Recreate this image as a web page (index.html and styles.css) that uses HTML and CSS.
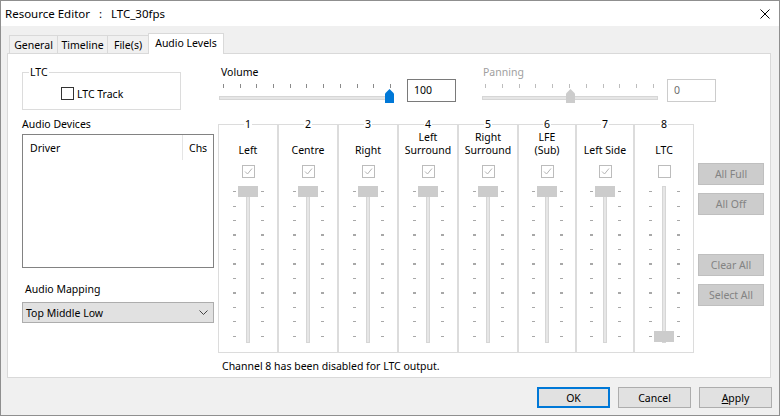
FILE: index.html
```html
<!DOCTYPE html>
<html lang="en">
<head>
  <meta charset="UTF-8" />
  <title>Resource Editor</title>
  <link rel="stylesheet" href="styles.css">
</head>
<body>
  <div class="window">
    <div class="titlebar">
      <span class="title">Resource Editor   :   LTC_30fps</span>
      <svg class="close" width="10" height="10" viewBox="0 0 10 10"><path d="M0.5 0.5 L9.5 9.5 M9.5 0.5 L0.5 9.5" stroke="#000" stroke-width="1"/></svg>
    </div>

    <div class="client">
      <div class="tabs">
        <div class="tab tab-general">General</div>
        <div class="tab tab-timeline">Timeline</div>
        <div class="tab tab-files">File(s)</div>
        <div class="tab active">Audio Levels</div>
      </div>

      <div class="panel">
        <!-- Coloana stanga -->
        <div class="left">
          <fieldset class="ltc">
            <legend>LTC</legend>
            <div class="ltc-row"><span class="check"></span><span>LTC Track</span></div>
          </fieldset>

          <div class="label devices-label">Audio Devices</div>
          <div class="listbox">
            <div class="list-head">
              <span class="col-driver">Driver</span>
              <span class="col-chs">Chs</span>
            </div>
          </div>

          <div class="label mapping-label">Audio Mapping</div>
          <div class="combo">
            <span>Top Middle Low</span>
            <svg width="9" height="6" viewBox="0 0 9 6"><path d="M0.5 0.5 L4.5 4.5 L8.5 0.5" fill="none" stroke="#444" stroke-width="1"/></svg>
          </div>
        </div>

        <!-- Coloana dreapta -->
        <div class="right">
          <div class="sliders">
            <div class="slider-group volume">
              <div class="slider-label">Volume</div>
              <div class="slider-row">
                <div class="slider">
                  <span class="ticks"></span>
                  <span class="rail"></span>
                  <svg class="knob" width="9" height="14" viewBox="0 0 9 14"><path d="M0 4.5 L4.5 0 L9 4.5 V14 H0 Z" fill="#0078d7"/></svg>
                </div>
                <div class="edit">100</div>
              </div>
            </div>
            <div class="slider-group panning disabled">
              <div class="slider-label">Panning</div>
              <div class="slider-row">
                <div class="slider">
                  <span class="ticks"></span>
                  <span class="rail"></span>
                  <svg class="knob" width="9" height="14" viewBox="0 0 9 14"><path d="M0 4.5 L4.5 0 L9 4.5 V14 H0 Z" fill="#cccccc"/></svg>
                </div>
                <div class="edit">0</div>
              </div>
            </div>
          </div>

          <div class="mixer">
            <div class="channels">
              <fieldset class="channel">
                <legend>1</legend>
                <div class="ch-body">
                  <div class="ch-name">Left</div>
                  <span class="check off"><svg width="11" height="11" viewBox="0 0 11 11"><path d="M2 5.5 L4.5 8 L9 2.5" fill="none" stroke="#b4b4b4"/></svg></span>
                  <div class="fader"><span class="track"></span><span class="scale"></span><span class="thumb"></span></div>
                </div>
              </fieldset>
              <fieldset class="channel">
                <legend>2</legend>
                <div class="ch-body">
                  <div class="ch-name">Centre</div>
                  <span class="check off"><svg width="11" height="11" viewBox="0 0 11 11"><path d="M2 5.5 L4.5 8 L9 2.5" fill="none" stroke="#b4b4b4"/></svg></span>
                  <div class="fader"><span class="track"></span><span class="scale"></span><span class="thumb"></span></div>
                </div>
              </fieldset>
              <fieldset class="channel">
                <legend>3</legend>
                <div class="ch-body">
                  <div class="ch-name">Right</div>
                  <span class="check off"><svg width="11" height="11" viewBox="0 0 11 11"><path d="M2 5.5 L4.5 8 L9 2.5" fill="none" stroke="#b4b4b4"/></svg></span>
                  <div class="fader"><span class="track"></span><span class="scale"></span><span class="thumb"></span></div>
                </div>
              </fieldset>
              <fieldset class="channel">
                <legend>4</legend>
                <div class="ch-body">
                  <div class="ch-name">Left<br>Surround</div>
                  <span class="check off"><svg width="11" height="11" viewBox="0 0 11 11"><path d="M2 5.5 L4.5 8 L9 2.5" fill="none" stroke="#b4b4b4"/></svg></span>
                  <div class="fader"><span class="track"></span><span class="scale"></span><span class="thumb"></span></div>
                </div>
              </fieldset>
              <fieldset class="channel">
                <legend>5</legend>
                <div class="ch-body">
                  <div class="ch-name">Right<br>Surround</div>
                  <span class="check off"><svg width="11" height="11" viewBox="0 0 11 11"><path d="M2 5.5 L4.5 8 L9 2.5" fill="none" stroke="#b4b4b4"/></svg></span>
                  <div class="fader"><span class="track"></span><span class="scale"></span><span class="thumb"></span></div>
                </div>
              </fieldset>
              <fieldset class="channel narrow">
                <legend>6</legend>
                <div class="ch-body">
                  <div class="ch-name">LFE<br>(Sub)</div>
                  <span class="check off"><svg width="11" height="11" viewBox="0 0 11 11"><path d="M2 5.5 L4.5 8 L9 2.5" fill="none" stroke="#b4b4b4"/></svg></span>
                  <div class="fader"><span class="track"></span><span class="scale"></span><span class="thumb"></span></div>
                </div>
              </fieldset>
              <fieldset class="channel narrow">
                <legend>7</legend>
                <div class="ch-body">
                  <div class="ch-name">Left Side</div>
                  <span class="check off"><svg width="11" height="11" viewBox="0 0 11 11"><path d="M2 5.5 L4.5 8 L9 2.5" fill="none" stroke="#b4b4b4"/></svg></span>
                  <div class="fader"><span class="track"></span><span class="scale"></span><span class="thumb"></span></div>
                </div>
              </fieldset>
              <fieldset class="channel">
                <legend>8</legend>
                <div class="ch-body">
                  <div class="ch-name">LTC</div>
                  <span class="check off"></span>
                  <div class="fader"><span class="track"></span><span class="scale"></span><span class="thumb low"></span></div>
                </div>
              </fieldset>
            </div>

            <div class="side-buttons">
              <div class="btn disabled">All Full</div>
              <div class="btn disabled">All Off</div>
              <div class="btn disabled gap">Clear All</div>
              <div class="btn disabled">Select All</div>
            </div>
          </div>

          <div class="note">Channel 8 has been disabled for LTC output.</div>
        </div>
      </div>

      <div class="footer">
        <div class="btn default">OK</div>
        <div class="btn">Cancel</div>
        <div class="btn"><u>A</u>pply</div>
      </div>
    </div>
  </div>
</body>
</html>
```

FILE: styles.css
```css
/* Baza */
* { box-sizing: border-box; }
body {
  margin: 0;
  font-family: "Noto Sans", "Liberation Sans", sans-serif;
  font-size: 10.5px;
  color: #000;
  background: #fff;
}

/* Fereastra */
.window {
  width: 780px; height: 416px;
  border: 1px solid #8f8f8f;
  background: #f0f0f0;
  display: flex;
  flex-direction: column;
}
.titlebar {
  height: 25px;
  background: #fff;
  display: flex;
  align-items: center;
  justify-content: space-between;
  padding: 0 9px 0 4px;
}
.title { white-space: pre; font-size: 11.5px; }
.close { display: block; }

.client {
  flex: 1;
  padding: 7px 8px 0 6px;
  display: flex;
  flex-direction: column;
}

/* Taburi */
.tabs {
  height: 20px;
  display: flex;
  align-items: flex-end;
  padding-left: 2px;
}
.tab {
  height: 18px;
  border: 1px solid #d9d9d9;
  border-bottom: none;
  margin-left: -1px;
  display: flex;
  align-items: center;
  justify-content: center;
  background: #f0f0f0;
}
.tab-general { width: 49px; margin-left: 0; }
.tab-timeline { width: 51px; }
.tab-files { width: 42px; }
.tab.active {
  width: 76px;
  height: 21px;
  margin: 0 0 -1px -1px;
  padding-bottom: 2px;
  background: #fff;
  position: relative;
  z-index: 1;
}

.panel {
  height: 325px;
  border: 1px solid #d9d9d9;
  background: #fff;
  display: flex;
}

/* Stanga */
.left {
  width: 192px;
  margin-left: 14px;
  padding-top: 11px;
}
fieldset {
  margin: 0;
  padding: 0;
  border: 1px solid #dcdcdc;
  min-width: 0;
}
legend {
  line-height: 14px;
  padding: 0 1px;
}
.ltc { width: 159px; }
.ltc legend { margin-left: 6px; }
.ltc-row {
  display: flex;
  align-items: center;
  gap: 3px;
  height: 13px;
  box-sizing: content-box;
  padding: 8px 0 9px 38px;
}
.check {
  width: 13px; height: 13px;
  border: 1px solid #333;
  background: #fff;
  display: flex;
  align-items: center;
  justify-content: center;
}
.check.off { border-color: #bcbcbc; }

.label { line-height: 14px; }
.devices-label { margin: 7px 0 3px; }
.listbox {
  height: 134px;
  border: 1px solid #828282;
}
.list-head {
  height: 25px;
  display: flex;
  align-items: center;
}
.col-driver {
  width: 160px;
  height: 100%;
  display: flex;
  align-items: center;
  padding-left: 7px;
  border-right: 1px solid #e5e5e5;
}
.col-chs { padding-left: 6px; }

.mapping-label { margin: 14px 0 6px; padding-left: 3px; }
.combo {
  height: 21px;
  border: 1px solid #adadad;
  background: #e1e1e1;
  display: flex;
  align-items: center;
  justify-content: space-between;
  padding: 0 5px 0 3px;
}
.combo svg { display: block; }

/* Dreapta */
.right {
  margin-left: 4px;
  padding-top: 11px;
}
.sliders {
  display: flex;
  gap: 26px;
  padding-left: 1px;
}
.slider-label {
  line-height: 14px;
  padding-left: 2px;
}
.slider-row { display: flex; }
.slider {
  position: relative;
  width: 175px;
  height: 24px;
}
.ticks {
  position: absolute;
  top: 5px; left: 4px;
  width: 168px; height: 4px;
  background: repeating-linear-gradient(to right, #8a8a8a 0 1px, transparent 1px 16.7px);
}
.rail {
  position: absolute;
  top: 17px; left: 0;
  width: 100%; height: 4px;
  border: 1px solid #d6d6d6;
  background: #e6e6e6;
}
.knob {
  position: absolute;
  top: 10px; left: 166px;
}
.edit {
  width: 49px; height: 23px;
  margin-left: 13px;
  border: 1px solid #7a7a7a;
  padding: 3px 0 0 6px;
  line-height: 14px;
}

.panning .slider-label { padding-left: 1px; color: #a0a0a0; }
.panning .slider { width: 176px; }
.panning .ticks {
  left: 3px; width: 170px;
  background: repeating-linear-gradient(to right, #bdbdbd 0 1px, transparent 1px 16.8px);
}
.panning .knob { left: 84px; }
.panning .edit {
  margin-left: 9px;
  border-color: #cccccc;
  color: #6d6d6d;
}

/* Mixer */
.mixer {
  display: flex;
  margin-top: 14px;
}
.channels { display: flex; }
.channel {
  width: 60px;
  height: 236px;
}
.channel.narrow { width: 58px; }
.channel legend {
  margin: 0 auto;
  padding: 0 1px;
}
.ch-body {
  display: flex;
  flex-direction: column;
  align-items: center;
}
.ch-name {
  height: 26px;
  line-height: 13px;
  display: flex;
  align-items: flex-end;
  text-align: center;
}
.ch-body .check { margin-top: 8px; }
.fader {
  position: relative;
  width: 100%;
  height: 157px;
  margin-top: 8px;
}
.track {
  display: block;
  width: 4px; height: 100%;
  margin: 0 auto;
  border: 1px solid #d6d6d6;
  background: #e6e6e6;
}
.scale {
  position: absolute;
  top: 5px; left: calc(50% - 15px);
  width: 31px; height: 146px;
  background-image:
    repeating-linear-gradient(to bottom, #a8a8a8 0 1px, transparent 1px 14.5px),
    repeating-linear-gradient(to bottom, #a8a8a8 0 1px, transparent 1px 14.5px);
  background-size: 3px 100%;
  background-position: left top, right top;
  background-repeat: no-repeat;
}
.thumb {
  position: absolute;
  top: 0; left: calc(50% - 10px);
  width: 20px; height: 11px;
  background: #cccccc;
}
.thumb.low { top: auto; bottom: 1px; }

.side-buttons {
  margin-left: 4px;
  padding-top: 46px;
  display: flex;
  flex-direction: column;
  gap: 8px;
}
.side-buttons .btn { width: 66px; height: 22px; }
.side-buttons .gap { margin-top: 31px; }

.note {
  margin-top: 6px;
  padding-left: 4px;
  line-height: 14px;
}

/* Butoane */
.btn {
  height: 21px;
  border: 1px solid #adadad;
  background: #e1e1e1;
  display: flex;
  align-items: center;
  justify-content: center;
}
.btn.disabled {
  background: #cccccc;
  border-color: #bfbfbf;
  color: #838383;
}
.btn.default { border: 2px solid #0078d7; }

.footer {
  display: flex;
  justify-content: flex-end;
  gap: 8px;
  padding-top: 9px;
  margin-right: -1px;
}
.footer .btn { width: 73px; }
```
